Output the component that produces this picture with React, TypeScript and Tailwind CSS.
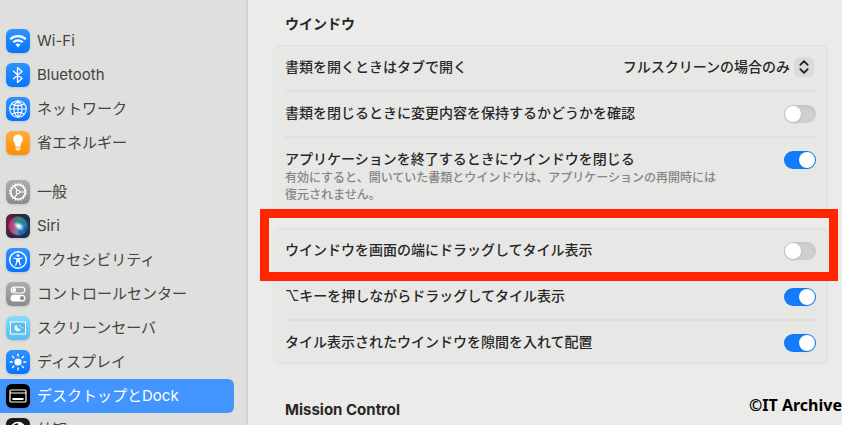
// src/App.tsx
import { useState, type ReactNode } from "react";
import clsx from "clsx";

type IconProps = { children: ReactNode; className: string };

const IconTile = ({ children, className }: IconProps) => (
  <span className={clsx("flex size-6 shrink-0 items-center justify-center overflow-hidden rounded-md shadow-sm", className)}>
    {children}
  </span>
);

const BLUE = "bg-linear-to-b from-[#2e93ff] to-[#0475fd]";
const GRAY = "bg-linear-to-b from-[#adadad] to-[#8b8b8b]";

const WifiIcon = () => (
  <svg viewBox="0 0 24 24" className="size-6" fill="none" stroke="#fff" strokeWidth="2.2">
    <path d="M4.2 10.2a11.2 11.2 0 0 1 15.6 0" />
    <path d="M7.3 13.3a6.8 6.8 0 0 1 9.4 0" />
    <path d="M12 18.2l-2.5-2.6a3.6 3.6 0 0 1 5 0z" fill="#fff" stroke="none" />
  </svg>
);

const BluetoothIcon = () => (
  <svg viewBox="0 0 24 24" className="size-6" fill="none" stroke="#fff" strokeWidth="1.3" strokeLinejoin="round" strokeLinecap="round">
    <path d="M7.5 8.2l8.5 7.4-4.5 3.8V4.6L16 8.4l-8.5 7.4" />
  </svg>
);

const NetworkIcon = () => (
  <svg viewBox="0 0 24 24" className="size-6" fill="none" stroke="#fff" strokeWidth="1.1">
    <circle cx="12" cy="12" r="8.3" />
    <path d="M12 3.7C6.5 8 6.5 16 12 20.3M12 3.7c5.5 4.3 5.5 12.3 0 16.6M12 3.7v16.6M3.7 12h16.6M5.6 6.8c3.6 2.6 9.2 2.6 12.8 0M5.6 17.2c3.6-2.6 9.2-2.6 12.8 0" />
  </svg>
);

const BulbIcon = () => (
  <svg viewBox="0 0 24 24" className="size-6" fill="#fff">
    <path d="M12 3.4c-3 0-4.8 2.1-4.8 4.7 0 2.5 2 3.7 2.3 7.4h5c.3-3.7 2.3-4.9 2.3-7.4 0-2.6-1.8-4.7-4.8-4.7z" />
    <path d="M9.6 16.3h4.8v1.8c0 1-.8 1.6-2.4 1.6s-2.4-.6-2.4-1.6z" opacity="0.75" />
  </svg>
);

const TEETH = Array.from({ length: 18 }, (_, i) => i * 20);

const GearIcon = () => (
  <svg viewBox="0 0 24 24" className="size-6" fill="none" stroke="#fff">
    <circle cx="12" cy="12" r="7.2" strokeWidth="1.5" />
    <circle cx="12" cy="12" r="1.8" strokeWidth="1.1" />
    <path d="M13.8 12h5.4M11.1 10.4L8.4 5.8M11.1 13.6l-2.7 4.6" strokeWidth="1.2" />
    {TEETH.map((deg) => (
      <path key={deg} d="M12 3v1.8" strokeWidth="1.3" transform={`rotate(${deg} 12 12)`} />
    ))}
  </svg>
);

const SiriIcon = () => (
  <svg viewBox="0 0 24 24" className="size-6">
    <defs>
      <linearGradient id="siri-bg" x1="0" y1="0" x2="1" y2="0.3">
        <stop offset="0" stopColor="#8a1440" />
        <stop offset="0.5" stopColor="#27263f" />
        <stop offset="1" stopColor="#123a5a" />
      </linearGradient>
      <linearGradient id="siri-orb" x1="0" y1="0.4" x2="1" y2="0.6">
        <stop offset="0" stopColor="#c32a62" />
        <stop offset="0.4" stopColor="#a9638f" />
        <stop offset="0.65" stopColor="#3f9fc0" />
        <stop offset="1" stopColor="#1770b5" />
      </linearGradient>
      <radialGradient id="siri-glow">
        <stop offset="0" stopColor="#fff" />
        <stop offset="0.35" stopColor="#e4f6ff" stopOpacity="0.85" />
        <stop offset="1" stopColor="#7fd0f5" stopOpacity="0" />
      </radialGradient>
    </defs>
    <rect width="24" height="24" fill="url(#siri-bg)" />
    <circle cx="12" cy="12" r="9" fill="url(#siri-orb)" />
    <path d="M7 5.5c4-3.8 11-2.3 13 3.5-2 2-5 2.5-8 1.5-3-.8-5-2-5-5z" fill="#1d8a76" opacity="0.8" />
    <path d="M13 13c3-.5 6 0 7.5 1-1 4-4.5 6.5-8 6.5z" fill="#1657b8" opacity="0.7" />
    <ellipse cx="13" cy="12.3" rx="6.5" ry="4.2" fill="url(#siri-glow)" transform="rotate(35 13 12)" />
    <circle cx="12" cy="12" r="9.5" fill="none" stroke="#6f5d80" strokeWidth="0.8" opacity="0.8" />
  </svg>
);

const AccessibilityIcon = () => (
  <svg viewBox="0 0 24 24" className="size-6" fill="none" stroke="#fff">
    <circle cx="12" cy="12" r="8.3" strokeWidth="1.4" />
    <circle cx="12" cy="7.6" r="1.4" fill="#fff" stroke="none" />
    <path d="M7.8 10l3.2.8v2.4l-1.3 4M16.2 10l-3.2.8v2.4l1.3 4" strokeWidth="1.2" strokeLinecap="round" />
    <path d="M10.6 10.4h2.8v3.6h-2.8z" fill="#fff" stroke="none" />
  </svg>
);

const ControlCenterIcon = () => (
  <svg viewBox="0 0 24 24" className="size-6">
    <rect x="5.2" y="5.2" width="13.6" height="5.8" rx="2.9" fill="none" stroke="#fff" strokeWidth="1.2" />
    <circle cx="8.2" cy="8.1" r="2" fill="#fff" />
    <rect x="4.6" y="12.8" width="14.8" height="6.8" rx="3.4" fill="#fff" />
    <circle cx="16" cy="16.2" r="2.1" fill="#8f8f8f" />
  </svg>
);

const ScreenSaverIcon = () => (
  <svg viewBox="0 0 24 24" className="size-6">
    <rect x="4.5" y="6" width="15" height="12" fill="#57bfe9" stroke="#fff" strokeWidth="1" />
    <path d="M11 8.7a3.3 3.3 0 1 0 3.8 4.3A3.3 3.3 0 0 1 11 8.7z" fill="#fff" />
    <circle cx="14.3" cy="10" r="0.8" fill="#fff" />
    <circle cx="16.7" cy="11.6" r="0.6" fill="#fff" />
  </svg>
);

const RAYS = [0, 45, 90, 135, 180, 225, 270, 315];

const DisplayIcon = () => (
  <svg viewBox="0 0 24 24" className="size-6" stroke="#fff" strokeWidth="1.4" strokeLinecap="round">
    <circle cx="12" cy="12" r="3.6" fill="#fff" stroke="none" />
    {RAYS.map((deg) => (
      <path key={deg} d="M12 4.3v1.8" transform={`rotate(${deg} 12 12)`} />
    ))}
  </svg>
);

const DockIcon = () => (
  <svg viewBox="0 0 24 24" className="size-6" fill="none" stroke="#fff">
    <rect x="4" y="6" width="16" height="12" rx="1" strokeWidth="1.2" />
    <path d="M4 9h16" strokeWidth="1" />
    <path d="M6.5 15h11" strokeWidth="2" />
  </svg>
);

const AppearanceIcon = () => (
  <svg viewBox="0 0 24 24" className="size-6">
    <circle cx="12" cy="12" r="7.5" fill="none" stroke="#fff" strokeWidth="1.4" />
    <path d="M12 4.5a7.5 7.5 0 0 1 0 15z" fill="#fff" />
  </svg>
);

const GROUPS = [
  [
    { label: "Wi-Fi", tile: BLUE, icon: <WifiIcon /> },
    { label: "Bluetooth", tile: BLUE, icon: <BluetoothIcon /> },
    { label: "ネットワーク", tile: BLUE, icon: <NetworkIcon /> },
    { label: "省エネルギー", tile: "bg-linear-to-b from-[#ffae33] to-[#fd8f00]", icon: <BulbIcon /> },
  ],
  [
    { label: "一般", tile: GRAY, icon: <GearIcon /> },
    { label: "Siri", tile: "bg-[#27263f]", icon: <SiriIcon /> },
    { label: "アクセシビリティ", tile: BLUE, icon: <AccessibilityIcon /> },
    { label: "コントロールセンター", tile: GRAY, icon: <ControlCenterIcon /> },
    { label: "スクリーンセーバ", tile: "bg-linear-to-b from-[#86dcfb] to-[#55bdec]", icon: <ScreenSaverIcon /> },
    { label: "ディスプレイ", tile: BLUE, icon: <DisplayIcon /> },
    { label: "デスクトップとDock", tile: "bg-black", icon: <DockIcon /> },
    { label: "外観", tile: "bg-[#1c1c1c]", icon: <AppearanceIcon /> },
  ],
];

function Sidebar() {
  const [active, setActive] = useState("デスクトップとDock");

  return (
    <nav className="w-62 shrink-0 border-r-2 border-[#d2d2d0] bg-[#dfdfdd] pr-3 text-[15px]">
      <div className="flex h-6 flex-col pl-1.5">
        <p className="-mt-3.5 text-xs leading-4 text-[#6e6e6e]">入力が可能</p>
      </div>
      {GROUPS.map((group, i) => (
        <ul key={i} className="mb-[15px]">
          {group.map((item) => (
            <li key={item.label}>
              <button
                type="button"
                onClick={() => setActive(item.label)}
                className={clsx(
                  "flex h-[34px] w-full items-center gap-[7px] rounded-r-md pl-1.5 text-left",
                  active === item.label ? "bg-[#4294ff] text-white" : "text-[#444443]"
                )}
              >
                <IconTile className={item.tile}>{item.icon}</IconTile>
                {item.label}
              </button>
            </li>
          ))}
        </ul>
      ))}
    </nav>
  );
}

function Row({ children, highlighted }: { children: ReactNode; highlighted?: boolean }) {
  return (
    <div className="relative flex min-h-[46px] justify-between border-b-2 border-[#dfdfde] pt-[11px] last:min-h-[42px] last:border-b-0">
      {children}
      {highlighted && (
        <div className="pointer-events-none absolute -top-5 -right-[22px] -bottom-2 -left-[25px] z-10 border-9 border-[#ff2600]" />
      )}
    </div>
  );
}

type ToggleRowProps = { id: string; label: string; note?: string; on?: boolean; highlighted?: boolean };

function ToggleRow({ id, label, note, on = false, highlighted }: ToggleRowProps) {
  return (
    <Row highlighted={highlighted}>
      <div>
        <label htmlFor={id} className="block">{label}</label>
        {note && <p className="max-w-[440px] pb-2.5 text-xs leading-[17px] text-[#858584]">{note}</p>}
      </div>
      <input
        id={id}
        type="checkbox"
        role="switch"
        defaultChecked={on}
        className="mt-0.5 h-[18px] w-8 shrink-0 appearance-none rounded-full bg-[#cfcfce] p-px shadow-inner before:block before:size-4 before:rounded-full before:bg-white before:shadow checked:bg-[#127dff] checked:before:ml-3.5"
      />
    </Row>
  );
}

const Card = ({ children }: { children: ReactNode }) => (
  <section className="rounded-md border border-[#dfdfde] bg-[#e7e7e6] px-[11px]">{children}</section>
);

export default function App() {
  return (
    <div className="flex h-screen overflow-hidden bg-white pr-2 font-['Inter','Noto_Sans_CJK_JP',sans-serif] text-sm leading-5">
      <Sidebar />
      <main className="relative min-w-0 flex-1 bg-[#ebebea] pt-3.5 pr-3.5 pl-[25px] font-medium text-[#272727]">
        <h2 className="mb-[11px] pl-3 font-bold">ウインドウ</h2>
        <Card>
          <Row>
            <label htmlFor="tabs">書類を開くときはタブで開く</label>
            <div className="relative">
              <select id="tabs" className="appearance-none pr-6.5 text-right">
                <option>フルスクリーンの場合のみ</option>
              </select>
              <svg viewBox="0 0 20 20" className="pointer-events-none absolute top-0 right-0.5 size-5" fill="none" stroke="#222" strokeWidth="1.8" strokeLinecap="round" strokeLinejoin="round">
                <rect width="20" height="20" rx="5" fill="#dadad9" stroke="none" />
                <path d="M6.3 7.8L10 4.2l3.7 3.6M6.3 12.2l3.7 3.6 3.7-3.6" />
              </svg>
            </div>
          </Row>
          <ToggleRow id="confirm" label="書類を閉じるときに変更内容を保持するかどうかを確認" />
          <ToggleRow
            id="close"
            label="アプリケーションを終了するときにウインドウを閉じる"
            note="有効にすると、開いていた書類とウインドウは、アプリケーションの再開時には復元されません。"
            on
          />
        </Card>
        <div className="h-3.5" />
        <Card>
          <ToggleRow id="edge" label="ウインドウを画面の端にドラッグしてタイル表示" highlighted />
          <ToggleRow id="option" label="⌥キーを押しながらドラッグしてタイル表示" on />
          <ToggleRow id="gap" label="タイル表示されたウインドウを隙間を入れて配置" on />
        </Card>
        <h2 className="mt-9 pl-3 text-[15px] font-bold">Mission Control</h2>
        <p className="absolute right-0 bottom-2.5 font-['Noto_Sans',sans-serif] text-base leading-5 font-bold text-black">©IT Archive</p>
      </main>
    </div>
  );
}
